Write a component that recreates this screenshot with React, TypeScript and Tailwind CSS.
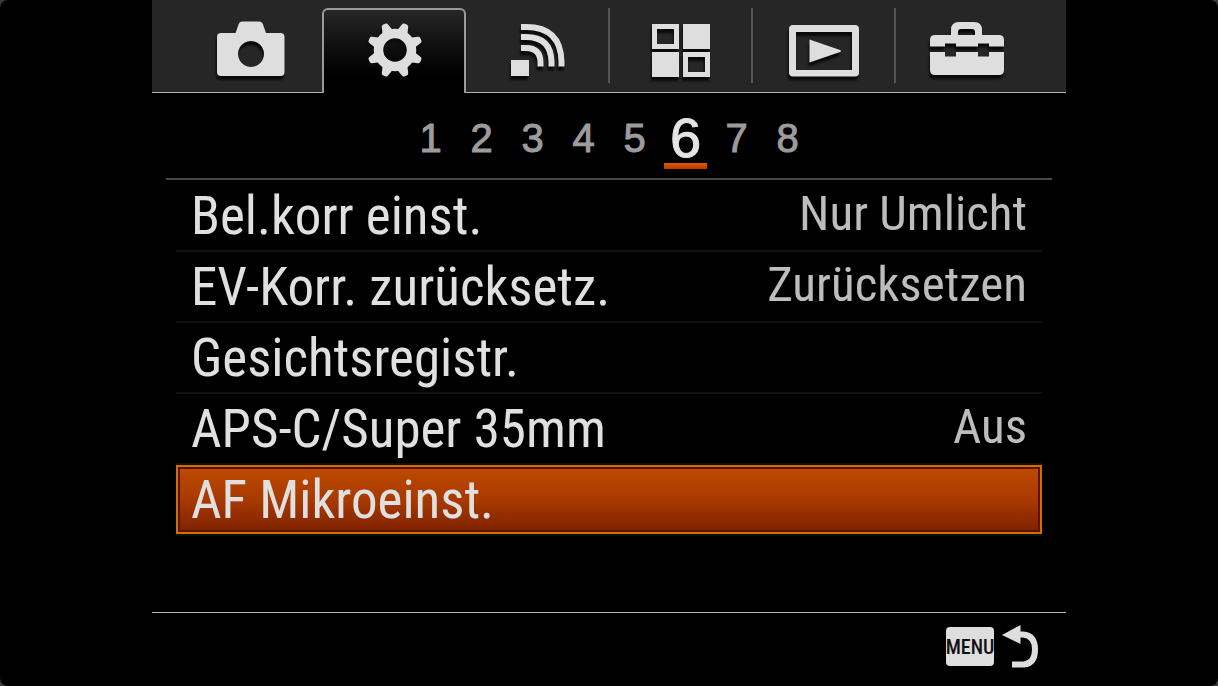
import React, { useState } from 'react';
import clsx from 'clsx';

interface MenuItem {
    label: string;
    value?: string;
}

interface TabDef {
    id: string;
    name: string;
    icon: React.ReactNode;
}

const ITEMS: MenuItem[] = [
    { label: 'Bel.korr einst.', value: 'Nur Umlicht' },
    { label: 'EV-Korr. zurücksetz.', value: 'Zurücksetzen' },
    { label: 'Gesichtsregistr.' },
    { label: 'APS-C/Super 35mm', value: 'Aus' },
    { label: 'AF Mikroeinst.' },
];

const PAGES = [1, 2, 3, 4, 5, 6, 7, 8];

// All tab icons share an 80x64 canvas
const Icon: React.FC<{ children: React.ReactNode }> = ({ children }) => (
    <svg
        viewBox="0 0 80 64"
        className="w-20 h-16 shrink-0 fill-[#dedede] drop-shadow-[-1px_4px_1px_#0a0a0a]"
        aria-hidden="true"
    >
        {children}
    </svg>
);

const CameraIcon = () => (
    <Icon>
        <path
            fillRule="evenodd"
            d="M10 15h14.500l3-8.500q1-3 4-3h16.500q3 0 4 3l3 8.500h14.500q4 0 4 4v35q0 4-4 4h-59.500q-4 0-4-4v-35q0-4 4-4ZM40 23a13 13 0 1 0 .01 0Z"
        />
    </Icon>
);

const GearIcon = () => (
    <Icon>
        <circle cx="41" cy="32" r="16.500" fill="none" stroke="#dedede" strokeWidth="9.500" />
        {[22.5, 67.5, 112.5, 157.5, 202.5, 247.5, 292.5, 337.5].map((angle) => (
            <path
                key={angle}
                transform={`rotate(${angle} 41 32)`}
                d="M35.500 13l2-7q.5-2 2-2h3q1.500 0 2 2l2 7Z"
            />
        ))}
    </Icon>
);

const WirelessIcon = () => (
    <Icon>
        <rect x="14" y="42" width="18" height="16" />
        <g fill="none" stroke="#dedede" strokeWidth="6">
            <path d="M24 9h5q35 0 35.500 35v4.500" />
            <path d="M24 19h5q25 0 25.500 25v4.500" />
            <path d="M24 30h5q14 0 14.500 14v4.500" />
        </g>
    </Icon>
);

const AppsIcon = () => (
    <Icon>
        <path fillRule="evenodd" d="M11 6h27v25H11ZM16 11v15h17V11Z" />
        <path d="M42 6h27v25H42ZM11 34h27v25H11Z" />
        <path fillRule="evenodd" d="M42 34h27v25H42ZM47 39v15h17V39Z" />
    </Icon>
);

const PlaybackIcon = () => (
    <Icon>
        <path
            fillRule="evenodd"
            d="M9 7h62q4 0 4 4v43.500q0 4-4 4H9q-4 0-4-4V11q0-4 4-4ZM12 14v38h56V14Z"
        />
        <path d="M25.500 21.500L56 32q2 1 0 2L25.500 44.500Z" />
    </Icon>
);

const ToolboxIcon = () => (
    <Icon>
        <path d="M24 17v-5q0-8 8-8h15q8 0 8 8v5h-7v-3q0-3-3-3H34q-3 0-3 3v3Z" />
        <path d="M8 17h64q5 0 5 5v6.500H62v-3H51v3H29v-3H18v3H3V22q0-5 5-5Z" />
        <path d="M3 34h15v4.500h11V34h22v4.500h11V34h15v18q0 5-5 5H8q-5 0-5-5Z" />
    </Icon>
);

const TABS: TabDef[] = [
    { id: 'camera', name: 'Kamera', icon: <CameraIcon /> },
    { id: 'custom', name: 'Benutzereinstellungen', icon: <GearIcon /> },
    { id: 'wireless', name: 'Drahtlos', icon: <WirelessIcon /> },
    { id: 'apps', name: 'Applikation', icon: <AppsIcon /> },
    { id: 'playback', name: 'Wiedergabe', icon: <PlaybackIcon /> },
    { id: 'setup', name: 'Einstellung', icon: <ToolboxIcon /> },
];

interface TabBarProps {
    active: number;
    onSelect: (index: number) => void;
}

const TabBar: React.FC<TabBarProps> = ({ active, onSelect }) => (
    <nav className="grid grid-cols-[170fr_144fr_144fr_143fr_143fr_170fr] h-[93px] bg-[#262626]">
        {TABS.map((tab, i) => {
            const isActive = i === active;
            // no divider next to the raised tab or after the last one
            const divided = !isActive && i !== active - 1 && i < TABS.length - 1;
            return (
                <button
                    key={tab.id}
                    type="button"
                    aria-label={tab.name}
                    onClick={() => onSelect(i)}
                    className={clsx(
                        'flex pt-2',
                        !isActive && 'border-b border-[#b4b4b4]',
                        i === 0 && 'pl-7',
                        i === TABS.length - 1 && 'pr-7'
                    )}
                >
                    <span
                        className={clsx(
                            'flex grow justify-center',
                            isActive
                                ? 'h-full rounded-t-md border-2 border-b-0 border-[#9a9a9a] bg-linear-to-b from-[#262626] via-[#080808] via-60% to-black pt-2'
                                : 'pt-[10px]',
                            divided && 'h-[75px] border-r-2 border-[#555555]'
                        )}
                    >
                        {tab.icon}
                    </span>
                </button>
            );
        })}
    </nav>
);

interface PageBarProps {
    page: number;
    onSelect: (page: number) => void;
}

const PageBar: React.FC<PageBarProps> = ({ page, onSelect }) => (
    <div className="mx-[14px] flex h-[87px] justify-center border-b-2 border-[#484848] pt-4 font-['Liberation_Sans']">
        {PAGES.map((n) => (
            <button
                key={n}
                type="button"
                onClick={() => onSelect(n)}
                className="flex w-[51px] flex-col items-center"
            >
                <span
                    className={clsx(
                        'flex h-[54px] items-center pt-1 leading-none [-webkit-text-stroke:1px]',
                        n === page ? 'text-[56px] text-[#e4e4e4]' : 'text-[40px] text-[#9c9c9c]'
                    )}
                >
                    {n}
                </span>
                {n === page && (
                    <span className="h-[6px] w-[43px] bg-linear-to-b from-[#e05a00] to-[#b83800]" />
                )}
            </button>
        ))}
    </div>
);

interface MenuRowProps {
    item: MenuItem;
    selected: boolean;
    onSelect: () => void;
}

const MenuRow: React.FC<MenuRowProps> = ({ item, selected, onSelect }) => (
    <li className="border-b-2 border-[#101010]">
        <button
            type="button"
            onClick={onSelect}
            className={clsx(
                'flex h-[69px] w-full items-center justify-between px-[15px] leading-none whitespace-nowrap',
                selected &&
                    'bg-linear-to-b from-[#c04c00] via-[#a83a00] to-[#7c2000] shadow-[inset_0_0_0_2px_#d07000,inset_0_0_0_4px_#5c1000]'
            )}
        >
            <span className="pt-[2px] text-[53px] text-[#e0e0e0]">{item.label}</span>
            <span className="pb-1 text-[49px] text-[#bdbdbd]">{item.value}</span>
        </button>
    </li>
);

const BackIcon = () => (
    <svg viewBox="0 0 38 46" className="h-[46px] w-[38px]" aria-hidden="true">
        <path d="M0 10L18.500 0v19Z" fill="#dedede" />
        <path
            d="M17 9.500h4q12 1 12 15t-11 15H10"
            fill="none"
            stroke="#dedede"
            strokeWidth="6"
        />
    </svg>
);

export const App: React.FC = () => {
    const [tab, setTab] = useState(1);
    const [page, setPage] = useState(6);
    const [selected, setSelected] = useState(4);

    return (
        <div className="bg-[#3c3c3c]">
            <main className="flex min-h-screen flex-col rounded-lg bg-black px-[152px] font-['Roboto_Condensed','Liberation_Sans_Narrow','Liberation_Sans',sans-serif]">
                <TabBar active={tab} onSelect={setTab} />
                <PageBar page={page} onSelect={setPage} />

                <ul className="mx-6 pt-px">
                    {ITEMS.map((item, i) => (
                        <MenuRow
                            key={item.label}
                            item={item}
                            selected={i === selected}
                            onSelect={() => setSelected(i)}
                        />
                    ))}
                </ul>

                <footer className="mt-auto flex h-[74px] justify-end border-t border-[#b4b4b4] pt-3 pr-[26px]">
                    <button type="button" className="flex items-start gap-2">
                        <span className="mt-[2px] flex h-[39px] w-12 items-center justify-center rounded-[4px] bg-[#dedede] text-[20px] font-medium leading-none text-[#111111]">
                            MENU
                        </span>
                        <BackIcon />
                    </button>
                </footer>
            </main>
        </div>
    );
};

export default App;
